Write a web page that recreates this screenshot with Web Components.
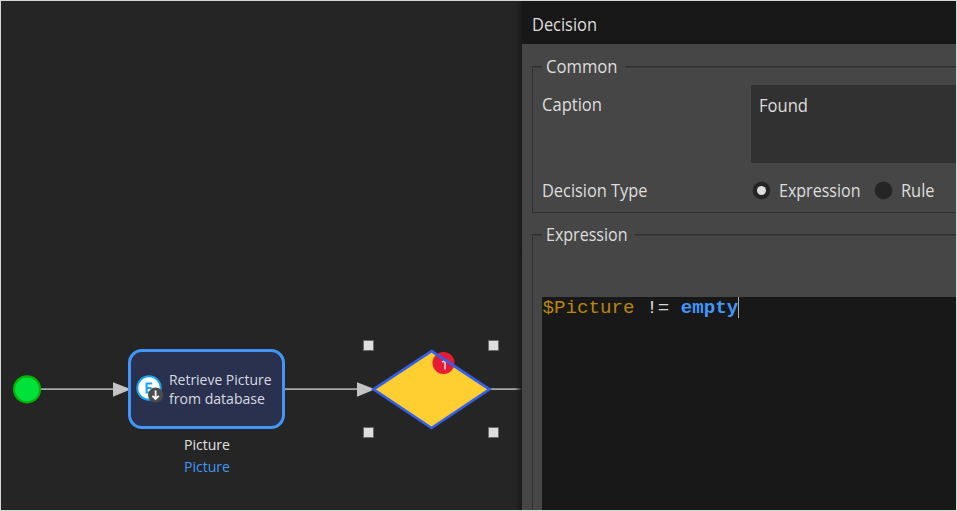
<!DOCTYPE html>
<html lang="en">
<head>
<meta charset="utf-8">
<title>Decision</title>
<style>
html,body{margin:0;height:100%;overflow:hidden;background:#252525}
</style>
</head>
<body>
<flow-app></flow-app>
<script>
function define(name, html, setup) {
  const tpl = document.createElement('template');
  tpl.innerHTML = html;
  customElements.define(name, class extends HTMLElement {
    constructor() {
      super();
      this.attachShadow({mode: 'open'}).append(tpl.content.cloneNode(true));
    }
    connectedCallback() { if (setup) setup.call(this); }
  });
}

// A single line of text whose advance is squeezed to the width attribute.
define('fit-text', `
<style>
:host{display:flex}
span{display:block;flex:none;white-space:pre;transform-origin:0 50%}
</style><span><slot></slot></span>`, function () {
  const s = this.shadowRoot.querySelector('span');
  this.style.width = this.getAttribute('width') + 'px';
  const w = s.getBoundingClientRect().width;
  if (w) s.style.transform = 'scaleX(' + this.getAttribute('width') / w + ')';
});

define('flow-canvas', `
<style>
:host{position:absolute;inset:0;display:block}
svg{position:absolute;inset:0}
.handle{fill:#dedede;stroke:#6a6a6a;stroke-width:1}
</style>
<svg width="955" height="509" viewBox="1 1 955 509">
  <g stroke="#a8a8a8" stroke-width="1.7">
    <path d="M41 389.2H115M285 389.2H358M489 389.2H522"/>
  </g>
  <path d="M113 382.2L131 389.3L113 396.8ZM357 382.2L375 389.3L357 396.8Z" fill="#c4c4c4"/>
  <circle cx="27" cy="389.3" r="13" fill="#00e13c" stroke="#04b404" stroke-width="2.2"/>
  <path d="M431.5 351L489.5 389.3L431.5 428L373.5 389.3Z" fill="#ffce31"/>
  <circle cx="443.5" cy="363" r="11" fill="#e81b34"/>
  <path d="M442 362L445 360.6V369.6" fill="none" stroke="#ffe6e6" stroke-width="1.4"/>
  <path d="M431.5 351L489.5 389.3L431.5 428L373.5 389.3Z" fill="none" stroke="#345fe8" stroke-width="2.7"/>
  <path class="handle" d="M363.5 340.5h10v10h-10zM488.5 340.5h10v10h-10zM363.5 427.5h10v10h-10zM488.5 427.5h10v10h-10z"/>
</svg>`);

define('activity-node', `
<style>
:host{position:absolute;left:127px;top:348px;width:157px;display:block;
  font:14.7px/19px "Open Sans","Noto Sans",sans-serif;color:#d7d9e0}
.box{box-sizing:border-box;height:80px;border:3px solid #4296f8;border-radius:14px;
  background:#29314f;display:flex;align-items:center;padding-left:5px;gap:5px}
svg{flex:none;margin-top:1px}
.out{display:flex;flex-direction:column;align-items:center;gap:3px;margin-top:6px}
.out .v{color:#e0e0e0}.out .t{color:#4296f8}
</style>
<div class="box">
  <svg width="28" height="29" viewBox="0 0 28 29">
    <circle cx="13" cy="13" r="11.7" fill="#fff" stroke="#13a5ef" stroke-width="2"/>
    <path d="M16.2 8.5H10.6V17.4H16.2M10.6 12.9H15.6" fill="none" stroke="#13a5ef" stroke-width="2"/>
    <circle cx="19.6" cy="20" r="7.6" fill="#4b4b4b"/>
    <path d="M19.6 15.5V23.5M16.4 20.8L19.6 24L22.8 20.8" fill="none" stroke="#fff" stroke-width="1.8"/>
  </svg>
  <div><fit-text width="102.5">Retrieve Picture</fit-text><fit-text width="96">from database</fit-text></div>
</div>
<div class="out"><fit-text class="v" width="46">Picture</fit-text><fit-text class="t" width="46">Picture</fit-text></div>`);

define('group-box', `
<style>
:host{display:block;margin-left:10px}
.top{display:flex;align-items:center;height:22px}
.top::before,.top::after{content:"";height:1px;background:#303030;box-shadow:0 1px #3b3b3b}
.top::before{width:10px}.top::after{flex:1;margin-left:8px}
.body{display:flow-root;box-sizing:border-box;height:var(--h);margin-top:-11px;padding:0 0 0 9px;
  border-left:1px solid #303030;border-bottom:var(--bottom,1px) solid #303030}
::slotted([slot=legend]){margin-left:3.5px;padding-top:1px}
</style>
<div class="top"><slot name="legend"></slot></div>
<div class="body"><slot></slot></div>`);

define('radio-option', `
<style>
:host{display:flex;align-items:center;gap:9px}
i{box-sizing:border-box;width:17px;height:17px;border-radius:50%;background:#252525;
  box-shadow:0 0 0 .5px #303030;display:grid;place-items:center}
:host([checked]) i::after{content:"";width:9px;height:9px;border-radius:50%;background:#dedede}
</style><i></i><slot></slot>`);

define('code-editor', `
<style>
:host{display:block;height:213px;margin-top:63px;background:#181818;
  font:19.2px/22px "Liberation Mono","Courier New",monospace}
.line{display:flex;padding-left:.5px;white-space:pre}
.var{color:#b9860b}.op{color:#d8d8d8}.key{color:#4296f8;font-weight:bold}
.caret{width:1px;height:21px;background:#aaa}
</style>
<div class="line"><span class="var">$Picture</span><span class="op"> != </span><span class="key">empty</span><span class="caret"></span></div>`);

define('decision-dialog', `
<style>
:host{position:absolute;left:521px;top:0;right:0;bottom:0;display:flex;flex-direction:column;
  overflow:hidden;background:#464646;color:#dedede;
  font:17.3px/22px "Open Sans","Noto Sans",sans-serif}
header{box-sizing:border-box;height:43px;flex:none;background:#181818;padding:13px 0 0 9.5px}
.content{padding-top:11px;flex:1}
.common{--h:147px}
.expr{--h:290px;--bottom:0px;margin-top:10px}
.row{display:grid;grid-template-columns:209px 1fr}
.caption{padding-top:19px}
.field{box-sizing:border-box;height:78px;background:#313131;padding:10px 0 0 8px}
.label{padding-top:9px}
.type{height:24px;margin-top:15px;align-items:center}
.type .label{padding:1px 0 0}
.radios{display:flex;gap:14.5px;padding-left:1.5px}
radio-option fit-text{padding-top:1px}
</style>
<header><fit-text width="65">Decision</fit-text></header>
<div class="content">
  <group-box class="common"><fit-text slot="legend" width="71.5">Common</fit-text>
    <div class="row caption"><div class="label"><fit-text width="60">Caption</fit-text></div>
      <div class="field"><fit-text width="49">Found</fit-text></div></div>
    <div class="row type"><div class="label"><fit-text width="105.5">Decision Type</fit-text></div>
      <div class="radios">
        <radio-option checked><fit-text width="81.5">Expression</fit-text></radio-option>
        <radio-option><fit-text width="33.5">Rule</fit-text></radio-option>
      </div></div>
  </group-box>
  <group-box class="expr"><fit-text slot="legend" width="81.5">Expression</fit-text>
    <code-editor></code-editor>
  </group-box>
</div>`);

define('flow-app', `
<style>
:host{box-sizing:border-box;display:block;position:relative;width:957px;height:511px;
  border:1px solid #d5d9d6;background:#252525;overflow:hidden}
.shade{position:absolute;left:514px;width:7px;top:0;bottom:0;background:linear-gradient(90deg,#25252500,#1a1a1a)}
</style>
<flow-canvas></flow-canvas>
<activity-node></activity-node>
<div class="shade"></div>
<decision-dialog></decision-dialog>`);
</script>
</body>
</html>
